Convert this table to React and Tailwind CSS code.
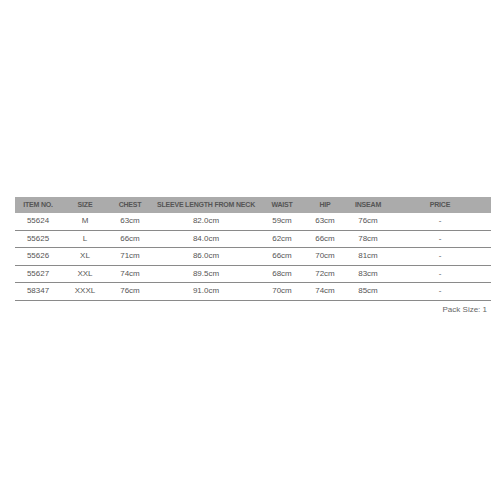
import React from "react";

const cols = [
  { h: "ITEM NO.", w: "w-[46px]" },
  { h: "SIZE", w: "w-[48px]" },
  { h: "CHEST", w: "w-[42px]" },
  { h: "SLEEVE LENGTH FROM NECK", w: "w-[110px]" },
  { h: "WAIST", w: "w-[42px]" },
  { h: "HIP", w: "w-[44px]" },
  { h: "INSEAM", w: "w-[42px]" },
  { h: "PRICE", w: "w-[102px]" },
];

const rows = [
  ["55624", "M", "63cm", "82.0cm", "59cm", "63cm", "76cm", "-"],
  ["55625", "L", "66cm", "84.0cm", "62cm", "66cm", "78cm", "-"],
  ["55626", "XL", "71cm", "86.0cm", "66cm", "70cm", "81cm", "-"],
  ["55627", "XXL", "74cm", "89.5cm", "68cm", "72cm", "83cm", "-"],
  ["58347", "XXXL", "76cm", "91.0cm", "70cm", "74cm", "85cm", "-"],
];

export default function App() {
  return (
    <div
      className="w-[500px] h-[500px] bg-white pt-[197px] pl-[15px]"
      style={{ fontFamily: '"Liberation Sans", Arial, sans-serif' }}
    >
      <div className="w-[476px] flex flex-col">
        <div className="flex h-[16px] items-center bg-[#ababab]">
          {cols.map((c) => (
            <div
              key={c.h}
              className={`${c.w} text-center text-[7px] font-bold text-[#555] tracking-[-0.2px] whitespace-nowrap`}
            >
              {c.h}
            </div>
          ))}
        </div>
        {rows.map((r) => (
          <div
            key={r[0]}
            className="flex h-[17.5px] items-center border-b border-[#8a8a8a]"
          >
            {r.map((v, i) => (
              <div
                key={i}
                className={`${cols[i].w} text-center text-[8px] text-[#555] whitespace-nowrap`}
              >
                {v}
              </div>
            ))}
          </div>
        ))}
        <div className="flex justify-end pr-[4px] pt-[3px] text-[8px] text-[#666]">
          Pack Size: 1
        </div>
      </div>
    </div>
  );
}
